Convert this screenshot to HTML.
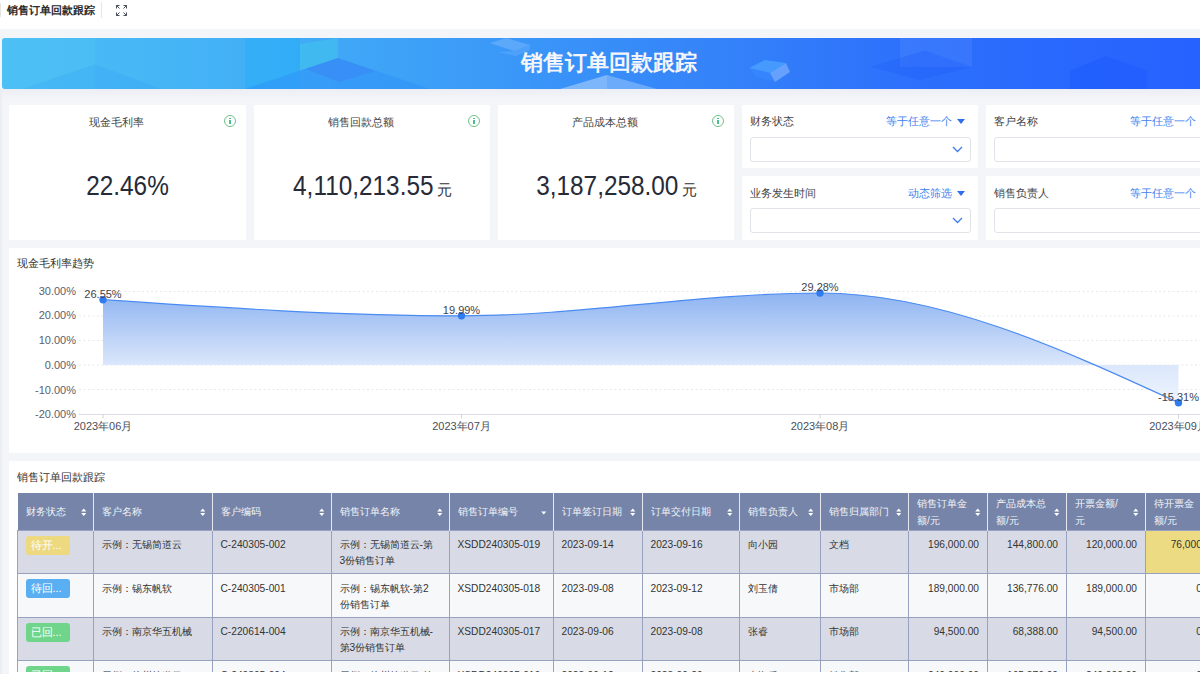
<!DOCTYPE html>
<html><head><meta charset="utf-8">
<style>
*{box-sizing:border-box;margin:0;padding:0}
html,body{width:1200px;height:674px;overflow:hidden;background:#f4f5f9;font-family:"Liberation Sans",sans-serif;color:#333}
.abs{position:absolute}
#top{left:0;top:0;width:1200px;height:29px;background:#fff}
#top .t{left:7px;top:2px;font-size:11px;font-weight:bold;color:#2b2b2b;line-height:16px;white-space:nowrap}
#top .sep{left:101px;top:2px;width:1px;height:16px;background:#e6e6e6}
#banner{left:2px;top:38px;width:1210px;height:51px;border-radius:3px;overflow:hidden;background:linear-gradient(90deg,#4cbff5 0%,#43b0f6 20%,#3b9af8 40%,#3584f9 58%,#2c6ffc 76%,#2661ff 100%)}
#banner .bt{left:0;width:1214px;top:-1px;height:51px;line-height:51px;text-align:center;color:#f4f6fa;font-size:22px;font-weight:bold;letter-spacing:0px}
.card{position:absolute;background:#fff}
.kpi .ttl{position:absolute;left:0;right:23px;top:9px;text-align:center;font-size:11px;color:#444;line-height:16px}
.kpi .info{position:absolute;top:10px;width:12px;height:12px;border:1.3px solid #6cc486;border-radius:50%}
.kpi .info:after{content:"";position:absolute;left:4px;top:4px;width:1.5px;height:4px;background:#4bbf8f}
.kpi .info:before{content:"";position:absolute;left:4px;top:1.5px;width:1.5px;height:1.5px;background:#4bbf8f}
.kpi .val{position:absolute;left:0;right:0;top:61px;text-align:center;font-size:28px;color:#262b37;line-height:40px;white-space:nowrap;transform:scaleX(0.87)}
.kpi .val small{font-size:15px;margin-left:5px;display:inline-block;transform:scaleX(1.15);color:#333}
.flt .lb{position:absolute;left:8px;top:8px;font-size:11px;color:#444;line-height:16px;white-space:nowrap}
.flt .op{position:absolute;top:8px;font-size:11px;color:#3d7ef0;line-height:16px;white-space:nowrap}
.flt .op i{display:inline-block;width:0;height:0;border-left:4.5px solid transparent;border-right:4.5px solid transparent;border-top:5px solid #2f6fef;margin-left:5px;vertical-align:1px}
.flt .inp{position:absolute;left:8px;top:32px;height:25px;border:1px solid #e1e3e8;border-radius:3px}
.flt .chev{position:absolute;top:8px;width:11px;height:7px}
#chart{left:9px;top:248px;width:1200px;height:205px}
#chart .ct{position:absolute;left:8px;top:7px;font-size:11px;color:#333;line-height:16px}
#tbl{left:9px;top:461px;width:1200px;height:220px}
#tbl .ct{position:absolute;left:8px;top:8px;font-size:11px;color:#333;line-height:16px}
table{position:absolute;left:0;top:0;border-collapse:collapse;table-layout:fixed;font-size:10.5px}
th{background:#7584a8;color:#f2f4f8;font-weight:500;text-align:left;height:37px;padding:2.5px 8px 0 8px;font-size:10.3px;border-left:1.5px solid #e6e9f0;position:relative;line-height:16.3px;vertical-align:middle;white-space:nowrap;overflow:hidden}
th:first-child{border-left:none}
td{height:43.5px;padding:6.5px 8px 0 7.5px;font-size:10.2px;border:1px solid #98a1bf;vertical-align:top;line-height:16px;color:#333;white-space:nowrap;overflow:hidden}
tr.o td{background:#d8dbe5}
tr.e td{background:#f7f8fa}
td.n{text-align:right}
.bdg{display:inline-block;width:44px;height:19px;border-radius:3px;color:#fff;line-height:19px;padding-left:5px;font-size:11px;margin-top:-1.5px;vertical-align:top;font-weight:500}
.sort{position:absolute;right:6.5px;top:50%;margin-top:-3.5px;width:5.5px;height:8.5px}
</style></head><body>
<div id="top" class="abs">
  <div class="abs" style="left:-3px;top:2px;width:4px;height:16px;border:1px solid #e3e3e3;border-radius:3px"></div>
  <div class="t abs">销售订单回款跟踪</div>
  <div class="sep abs"></div>
  <svg class="abs" style="left:116px;top:5px" width="11" height="11" viewBox="0 0 11 11" fill="none" stroke="#4a4f5a" stroke-width="1">
    <path d="M0.5 3.5V0.5H3.5M0.5 0.5L3.5 3.5M7.5 0.5H10.5V3.5M10.5 0.5L7.5 3.5M0.5 7.5V10.5H3.5M0.5 10.5L3.5 7.5M7.5 10.5H10.5V7.5M10.5 10.5L7.5 7.5"/>
  </svg>
</div>
<div class="abs" style="left:0;top:89px;width:1200px;height:10px;background:linear-gradient(#edeef3,#f4f5f9)"></div>
<div class="abs" style="left:0;top:89px;width:1.5px;height:585px;background:#eceef2"></div>
<div id="banner" class="abs">
  <svg class="abs" style="left:0;top:0" width="1210" height="51" viewBox="2 38 1210 51">
    <rect x="2" y="38" width="93" height="51" fill="#4fc6f6" opacity="0.35"/>
    <rect x="245" y="38" width="55" height="51" fill="#1eb0fb" opacity="0.4"/>
    <polygon points="22,89 95,64.5 162,89" fill="#2f9ef7" opacity="0.25"/>
    <polygon points="245,89 338,58 430,89" fill="#2a8ef8" opacity="0.45"/>
    <polygon points="300,44 338,38 338,58 300,70.5" fill="#40cbe8" opacity="0.45"/>
    <polygon points="305,69 338,58 375,71 340,82" fill="#3a84f6" opacity="0.5"/>
    <polygon points="340,82 375,71 360,76 345,80" fill="#6fb7fb" opacity="0.3"/>
    <polygon points="490,43 506,38 530,45 514,51" fill="#9cc8ff" opacity="0.35"/>
    <polygon points="498,52 514,51 530,45 530,50 516,56" fill="#7fbaff" opacity="0.3"/>
    <polygon points="560,89 607,75 657,89" fill="#8ec0fb" opacity="0.6"/>
    <polygon points="560,89 607,75 607,89" fill="#a9d0fd" opacity="0.3"/>
    <polygon points="749,68 765,60 786,63 770,73" fill="#4fa6ff" opacity="0.7"/>
    <polygon points="749,68 770,73 775,82 756,77" fill="#3a8bff" opacity="0.5"/>
    <polygon points="770,73 786,63 790,72 775,82" fill="#8fc0ff" opacity="0.55"/>
    <rect x="900" y="38" width="72" height="29" fill="#6da2ff" opacity="0.2"/>
    <polygon points="870,67 925,50.5 972,67 920,80" fill="#1f5ff8" opacity="0.35"/>
    <polygon points="1070,89 1070,71 1106,56 1147,71 1147,89" fill="#1a58ff" opacity="0.45"/>
  </svg>
  <div class="bt abs">销售订单回款跟踪</div>
</div>

<div class="card kpi" style="left:9px;top:105px;width:237px;height:135px">
  <div class="ttl">现金毛利率</div><div class="info" style="left:215px"></div>
  <div class="val">22.46%</div>
</div>
<div class="card kpi" style="left:254px;top:105px;width:236px;height:135px">
  <div class="ttl">销售回款总额</div><div class="info" style="left:214px"></div>
  <div class="val">4,110,213.55<small>元</small></div>
</div>
<div class="card kpi" style="left:498px;top:105px;width:236px;height:135px">
  <div class="ttl">产品成本总额</div><div class="info" style="left:214px"></div>
  <div class="val">3,187,258.00<small>元</small></div>
</div>

<div class="card flt" style="left:742px;top:105px;width:236px;height:63px">
  <div class="lb">财务状态</div><div class="op" style="right:13.5px">等于任意一个<i></i></div>
  <div class="inp" style="width:221px"><svg class="chev" style="right:7px" width="11" height="7" viewBox="0 0 11 7"><path d="M1 1L5.5 5.5L10 1" fill="none" stroke="#3b7cf0" stroke-width="1.3"/></svg></div>
</div>
<div class="card flt" style="left:742px;top:176px;width:236px;height:64px">
  <div class="lb" style="top:9px">业务发生时间</div><div class="op" style="right:13.5px;top:9px">动态筛选<i></i></div>
  <div class="inp" style="width:221px"><svg class="chev" style="right:7px" width="11" height="7" viewBox="0 0 11 7"><path d="M1 1L5.5 5.5L10 1" fill="none" stroke="#3b7cf0" stroke-width="1.3"/></svg></div>
</div>
<div class="card flt" style="left:986px;top:105px;width:240px;height:63px">
  <div class="lb">客户名称</div><div class="op" style="left:144px">等于任意一个<i></i></div>
  <div class="inp" style="width:240px"></div>
</div>
<div class="card flt" style="left:986px;top:176px;width:240px;height:64px">
  <div class="lb" style="top:9px">销售负责人</div><div class="op" style="left:144px;top:9px">等于任意一个<i></i></div>
  <div class="inp" style="width:240px"></div>
</div>

<div id="chart" class="card">
  <div class="ct">现金毛利率趋势</div>
</div>
<svg class="abs" style="left:0;top:248px" width="1200" height="205" viewBox="0 248 1200 205">
  <defs>
    <linearGradient id="ag" gradientUnits="userSpaceOnUse" x1="0" y1="292" x2="0" y2="414">
      <stop offset="0" stop-color="#8db3f1"/>
      <stop offset="0.6" stop-color="#dbe7fb"/>
      <stop offset="1" stop-color="#f4f8fe"/>
    </linearGradient>
  </defs>
  <g stroke="#e6e8eb" stroke-width="1" stroke-dasharray="2 2.5">
    <line x1="79" y1="291.5" x2="1200" y2="291.5"/>
    <line x1="79" y1="316" x2="1200" y2="316"/>
    <line x1="79" y1="340.5" x2="1200" y2="340.5"/>
    <line x1="79" y1="365" x2="1200" y2="365"/>
    <line x1="79" y1="389.5" x2="1200" y2="389.5"/>
  </g>
  <path d="M103.0,299.7 C222.5,307.8 342.0,315.8 461.5,315.8 C581.0,315.8 700.5,293.0 820.0,293.0 C939.5,293.0 1059.0,347.8 1178.5,402.7 L1178.5,365 L103,365 Z" fill="url(#ag)"/>
  <line x1="79" y1="414.5" x2="1200" y2="414.5" stroke="#dcdee3" stroke-width="1"/>
  <g stroke="#cfd2d8" stroke-width="1">
    <line x1="103" y1="414.5" x2="103" y2="418.5"/><line x1="461.5" y1="414.5" x2="461.5" y2="418.5"/>
    <line x1="820" y1="414.5" x2="820" y2="418.5"/><line x1="1178.5" y1="414.5" x2="1178.5" y2="418.5"/>
  </g>
  <path d="M103.0,299.7 C222.5,307.8 342.0,315.8 461.5,315.8 C581.0,315.8 700.5,293.0 820.0,293.0 C939.5,293.0 1059.0,347.8 1178.5,402.7" fill="none" stroke="#4a8bf2" stroke-width="1.2"/>
  <g fill="#2f7bf0">
    <circle cx="103" cy="299.7" r="3.7"/><circle cx="461.5" cy="315.8" r="3.7"/><circle cx="820" cy="293" r="3.7"/><circle cx="1178.5" cy="402.7" r="3.7"/>
  </g>
  <g font-family="Liberation Sans, sans-serif" font-size="11" fill="#5b606b" text-anchor="end">
    <text x="76" y="294.8">30.00%</text><text x="76" y="319.3">20.00%</text><text x="76" y="344">10.00%</text>
    <text x="76" y="369">0.00%</text><text x="76" y="393.5">-10.00%</text><text x="76" y="418">-20.00%</text>
  </g>
  <g font-family="Liberation Sans, sans-serif" font-size="11" fill="#4a4f59" text-anchor="middle">
    <text x="103" y="430">2023年06月</text><text x="461.5" y="430">2023年07月</text><text x="820" y="430">2023年08月</text><text x="1178.5" y="430">2023年09月</text>
  </g>
  <g font-family="Liberation Sans, sans-serif" font-size="11" fill="#3f444d" text-anchor="middle">
    <text x="103" y="298">26.55%</text><text x="461.5" y="314">19.99%</text><text x="820" y="291">29.28%</text><text x="1178.5" y="400.5">-15.31%</text>
  </g>
</svg>

<div id="tbl" class="card">
  <div class="ct">销售订单回款跟踪</div>
</div>
<div class="abs" style="left:17px;top:493px;width:1183px;height:179px;overflow:hidden"><table style="left:0;top:0;width:1207px"><colgroup><col style="width:76px"><col style="width:119px"><col style="width:119px"><col style="width:118px"><col style="width:104px"><col style="width:89px"><col style="width:97px"><col style="width:81px"><col style="width:88px"><col style="width:79px"><col style="width:79px"><col style="width:79px"><col style="width:79px"></colgroup><tr><th>财务状态<svg class="sort" viewBox="0 0 6 10"><path d="M0 4L3 0.5L6 4Z M0 6L3 9.5L6 6Z" fill="#fff"/></svg></th><th>客户名称<svg class="sort" viewBox="0 0 6 10"><path d="M0 4L3 0.5L6 4Z M0 6L3 9.5L6 6Z" fill="#fff"/></svg></th><th>客户编码<svg class="sort" viewBox="0 0 6 10"><path d="M0 4L3 0.5L6 4Z M0 6L3 9.5L6 6Z" fill="#fff"/></svg></th><th>销售订单名称<svg class="sort" viewBox="0 0 6 10"><path d="M0 4L3 0.5L6 4Z M0 6L3 9.5L6 6Z" fill="#fff"/></svg></th><th>销售订单编号<svg class="sort" viewBox="0 0 6 10"><path d="M0 4L3 7.5L6 4Z" fill="#fff"/></svg></th><th>订单签订日期<svg class="sort" viewBox="0 0 6 10"><path d="M0 4L3 0.5L6 4Z M0 6L3 9.5L6 6Z" fill="#fff"/></svg></th><th>订单交付日期<svg class="sort" viewBox="0 0 6 10"><path d="M0 4L3 0.5L6 4Z M0 6L3 9.5L6 6Z" fill="#fff"/></svg></th><th>销售负责人<svg class="sort" viewBox="0 0 6 10"><path d="M0 4L3 0.5L6 4Z M0 6L3 9.5L6 6Z" fill="#fff"/></svg></th><th>销售归属部门<svg class="sort" viewBox="0 0 6 10"><path d="M0 4L3 0.5L6 4Z M0 6L3 9.5L6 6Z" fill="#fff"/></svg></th><th>销售订单金<br>额/元<svg class="sort" viewBox="0 0 6 10"><path d="M0 4L3 0.5L6 4Z M0 6L3 9.5L6 6Z" fill="#fff"/></svg></th><th>产品成本总<br>额/元<svg class="sort" viewBox="0 0 6 10"><path d="M0 4L3 0.5L6 4Z M0 6L3 9.5L6 6Z" fill="#fff"/></svg></th><th>开票金额/<br>元<svg class="sort" viewBox="0 0 6 10"><path d="M0 4L3 0.5L6 4Z M0 6L3 9.5L6 6Z" fill="#fff"/></svg></th><th>待开票金<br>额/元<svg class="sort" viewBox="0 0 6 10"><path d="M0 4L3 0.5L6 4Z M0 6L3 9.5L6 6Z" fill="#fff"/></svg></th></tr><tr class="o"><td><span class="bdg" style="background:#ecd980">待开...</span></td><td>示例：无锡简道云</td><td>C-240305-002</td><td>示例：无锡简道云-第<br>3份销售订单</td><td>XSDD240305-019</td><td>2023-09-14</td><td>2023-09-16</td><td>向小园</td><td>文档</td><td class="n">196,000.00</td><td class="n">144,800.00</td><td class="n">120,000.00</td><td class="n" style="background:#eddb83">76,000.00</td></tr><tr class="e"><td><span class="bdg" style="background:#5aaef2">待回...</span></td><td>示例：锡东帆软</td><td>C-240305-001</td><td>示例：锡东帆软-第2<br>份销售订单</td><td>XSDD240305-018</td><td>2023-09-08</td><td>2023-09-12</td><td>刘玉倩</td><td>市场部</td><td class="n">189,000.00</td><td class="n">136,776.00</td><td class="n">189,000.00</td><td class="n">0.00</td></tr><tr class="o"><td><span class="bdg" style="background:#6fd58a">已回...</span></td><td>示例：南京华五机械</td><td>C-220614-004</td><td>示例：南京华五机械-<br>第3份销售订单</td><td>XSDD240305-017</td><td>2023-09-06</td><td>2023-09-08</td><td>张睿</td><td>市场部</td><td class="n">94,500.00</td><td class="n">68,388.00</td><td class="n">94,500.00</td><td class="n">0.00</td></tr><tr class="e"><td><span class="bdg" style="background:#6fd58a">已回...</span></td><td>示例：徐州简道云</td><td>C-240305-004</td><td>示例：徐州简道云-第<br>4份销售订单</td><td>XSDD240305-016</td><td>2023-09-12</td><td>2023-09-20</td><td>李海乐</td><td>销售部</td><td class="n">240,000.00</td><td class="n">165,876.00</td><td class="n">240,000.00</td><td class="n">0.00</td></tr></table></div>
</body></html>
